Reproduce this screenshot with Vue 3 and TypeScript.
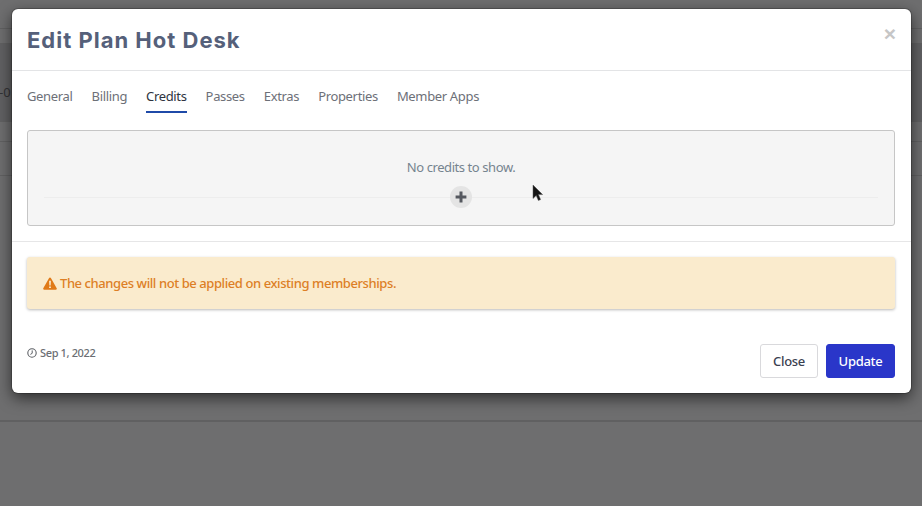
<script setup lang="ts">
const tabs: string[] = ['General', 'Billing', 'Credits', 'Passes', 'Extras', 'Properties', 'Member Apps']
const active = 'Credits'
</script>

<template>
  <div class="page">
    <div class="bg-table">
      <div class="bg-row r1"></div>
      <div class="bg-row r2"></div>
      <div class="bg-row r3"><span class="bg-o">-0</span></div>
      <div class="bg-row r4"></div>
      <div class="bg-row r5"></div>
    </div>
    <div class="bg-foot"></div>

    <section class="modal">
      <header class="head">
        <h1>Edit Plan Hot Desk</h1>
        <span class="x">×</span>
      </header>
      <nav class="tabs">
        <a v-for="t in tabs" :key="t" :class="['tab', { on: t === active }]">{{ t }}</a>
      </nav>
      <div class="well-wrap">
        <div class="well">
          <p>No credits to show.</p>
          <div class="divider">
            <span class="plus">
              <svg width="12" height="12" viewBox="0 0 12 12"><path d="M4.5 0.6h3v3.9h3.9v3H7.5v3.9h-3V7.5H0.6v-3h3.9z" fill="#55585f"/></svg>
            </span>
          </div>
          <svg class="cursor" width="14" height="20" viewBox="0 0 14 20">
            <path d="M1 1v13.5l3.2-3 2.2 5 2.2-.9-2.2-5h4.2z" fill="#151515" stroke="#555" stroke-width=".5"/>
          </svg>
        </div>
      </div>
      <div class="alert-wrap">
        <div class="alert">
          <svg width="14" height="13" viewBox="0 0 14 13"><path d="M7 .4a1 1 0 0 1 .9.5l5.8 10.3a1 1 0 0 1-.9 1.5H1.2a1 1 0 0 1-.9-1.5L6.1.9A1 1 0 0 1 7 .4z" fill="#e07a18"/><path d="M6.1 3.8h1.8l-.25 4.6H6.35zM6.1 9.4h1.8v1.6H6.1z" fill="#faebcd"/></svg>
          <span>The changes will not be applied on existing memberships.</span>
        </div>
      </div>
      <footer class="foot">
        <div class="date">
          <svg width="10" height="10" viewBox="0 0 10 10"><circle cx="5" cy="5" r="4.2" fill="none" stroke="#5c5f64" stroke-width="1.1"/><path d="M5.2 2.4v2.9L3.4 6.4" fill="none" stroke="#5c5f64"/></svg>
          <span>Sep 1, 2022</span>
        </div>
        <div class="btns">
          <button class="btn close">Close</button>
          <button class="btn update">Update</button>
        </div>
      </footer>
    </section>
  </div>
</template>

<style>
html, body { margin: 0; }
</style>

<style scoped>
.page {
  position: relative;
  width: 922px;
  height: 506px;
  overflow: hidden;
  background: #6e6e6f;
  font-family: "Noto Sans", sans-serif;
}
.bg-table { position: absolute; inset: 0 0 auto 0; }
.bg-row { border-bottom: 1px solid #616162; position: relative; box-sizing: border-box; }
.r1 { height: 29px; }
.r2 { height: 15px; }
.r3 { height: 78px; background: #616163; }
.r4 { height: 20px; }
.r5 { height: 34px; }
.bg-o { position: absolute; left: -1px; top: 38px; font-size: 13px; line-height: 20px; color: #333335; }
.bg-foot { position: absolute; left: 0; right: 0; top: 420px; height: 2px; background: #606061; }
.modal {
  position: absolute;
  left: 12px;
  top: 9px;
  width: 899px;
  height: 384px;
  background: #fff;
  border-radius: 6px;
  box-shadow: 0 0 0 1px rgba(0, 0, 0, .2), 0 5px 15px rgba(0, 0, 0, .6);
  display: flex;
  flex-direction: column;
}
.head {
  height: 62px;
  box-sizing: border-box;
  border-bottom: 1px solid #e3e4e6;
  padding: 0 15px;
  display: flex;
  align-items: center;
  justify-content: space-between;
}
h1 {
  margin: 0;
  font: 700 22px Inter, sans-serif;
  letter-spacing: 1px;
  color: #55607a;
}
.x {
  font: 700 21px "Liberation Sans", sans-serif;
  color: #c6c6c6;
  margin: -12px 0 0;
}
.tabs {
  display: flex;
  gap: 19px;
  padding: 0 15px;
  height: 59px;
  box-sizing: border-box;
}
.tab {
  font-size: 13px;
  letter-spacing: -.34px;
  color: #6d7078;
  height: 40px;
  line-height: 50px;
}
.tab.on {
  color: #2e3340;
  border-bottom: 2px solid #1f4aa8;
}
.well-wrap {
  padding: 0 16px 15px 15px;
  border-bottom: 1px solid #e6e6e7;
}
.well {
  position: relative;
  height: 96px;
  box-sizing: border-box;
  background: #f5f5f5;
  border: 1px solid #c6c6c6;
  border-radius: 3px;
  padding: 0 16px;
}
.well p {
  margin: 0;
  padding-top: 26px;
  text-align: center;
  font-size: 13px;
  letter-spacing: -.42px;
  line-height: 20px;
  color: #76848f;
}
.divider {
  margin-top: 20px;
  border-top: 1px solid #ededed;
  display: flex;
  justify-content: center;
  height: 0;
}
.plus {
  width: 22px;
  height: 22px;
  margin-top: -12px;
  border-radius: 50%;
  background: #e4e4e4;
  display: flex;
  align-items: center;
  justify-content: center;
  flex: none;
}
.cursor { position: absolute; left: 504px; top: 53px; }
.alert-wrap { padding: 15px 16px 0 15px; }
.alert {
  height: 52px;
  box-sizing: border-box;
  background: #faebcd;
  border-radius: 3px;
  box-shadow: 0 1px 3px rgba(0, 0, 0, .28);
  padding: 0 16px;
  display: flex;
  align-items: center;
  gap: 3px;
  font-size: 13px;
  font-weight: 500;
  letter-spacing: -.42px;
  color: #dd7f26;
}
.foot {
  flex: 1;
  display: flex;
  justify-content: space-between;
  padding: 0 16px 15px 15px;
  align-items: flex-end;
}
.date {
  display: flex;
  align-items: center;
  gap: 3px;
  font-size: 11px;
  font-weight: 500;
  letter-spacing: -.36px;
  color: #6b6e73;
  margin-bottom: 18px;
}
.btns { display: flex; gap: 8px; }
.btn {
  height: 34px;
  box-sizing: border-box;
  border-radius: 3px;
  font: 500 13px "Noto Sans", sans-serif;
  letter-spacing: -.3px;
  padding: 0;
}
.close {
  width: 58px;
  background: #fff;
  border: 1px solid #d9d9dc;
  color: #3a4050;
}
.update {
  width: 69px;
  background: #2a36c9;
  border: 1px solid #2a36c9;
  color: #fff;
}
</style>
